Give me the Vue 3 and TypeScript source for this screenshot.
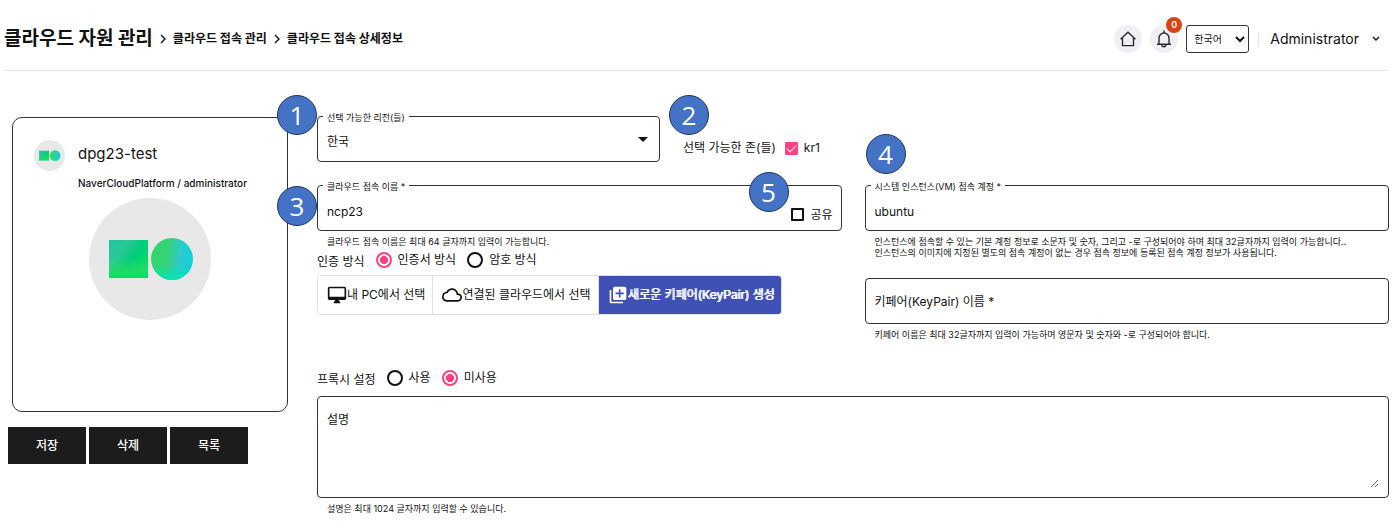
<script setup lang="ts">
import { ref } from 'vue'

const language = ref('ko')
const region = ref('kr')
const zoneKr1 = ref(true)
const connectionName = ref('ncp23')
const shared = ref(false)
const account = ref('ubuntu')
const keyPairName = ref('')
const authMethod = ref('cert')
const proxy = ref('off')
const description = ref('')
const actions = ['저장', '삭제', '목록']
</script>

<template>
  <div class="page">
    <header class="top">
      <nav class="crumbs" aria-label="breadcrumb">
        <h1>클라우드 자원 관리</h1>
        <svg class="sep" viewBox="0 0 6 10"><path d="M1 1l4 4-4 4" /></svg>
        <span>클라우드 접속 관리</span>
        <svg class="sep" viewBox="0 0 6 10"><path d="M1 1l4 4-4 4" /></svg>
        <span>클라우드 접속 상세정보</span>
      </nav>
      <div class="tools">
        <button class="round" type="button" aria-label="홈">
          <svg viewBox="0 0 18 18"><path d="M1.5 9.2L9 2.2l7.5 7M3.500 7.600v8h11v-8" /></svg>
        </button>
        <button class="round" type="button" aria-label="알림">
          <svg viewBox="0 0 18 18"><path d="M9 .5v2M2 14.2h14M4 14V8a5 5 0 0 1 10 0v6M6.800 14.500a2.200 2.200 0 0 0 4.400 0" /></svg>
          <span class="badge">0</span>
        </button>
        <select v-model="language" class="lang" aria-label="언어">
          <option value="ko">한국어</option>
        </select>
        <span class="bar"></span>
        <button class="user" type="button">
          Administrator
          <svg viewBox="0 0 8 6"><path d="M1 1l3 3 3-3" /></svg>
        </button>
      </div>
    </header>

    <main class="body">
      <aside class="side">
        <section class="card">
          <div class="card-head">
            <span class="avatar">
              <svg viewBox="0 0 122 122">
                <defs>
                  <linearGradient id="sq" x1="0" y1="0" x2="1" y2="0.7">
                    <stop offset="0" stop-color="#1cc6a4" />
                    <stop offset="0.35" stop-color="#2cc896" />
                    <stop offset="0.6" stop-color="#00cc7c" />
                    <stop offset="1" stop-color="#00e15c" />
                  </linearGradient>
                  <linearGradient id="sqg" x1="0" y1="0" x2="0" y2="1">
                    <stop offset="0.45" stop-color="#2fd872" stop-opacity="0" />
                    <stop offset="0.85" stop-color="#22dc62" stop-opacity="0.9" />
                    <stop offset="1" stop-color="#00df66" />
                  </linearGradient>
                  <linearGradient id="ci" x1="0" y1="0.4" x2="1" y2="0.5">
                    <stop offset="0" stop-color="#2fd868" />
                    <stop offset="0.38" stop-color="#36d278" />
                    <stop offset="0.68" stop-color="#2ccbc8" />
                    <stop offset="1" stop-color="#10cfe0" />
                  </linearGradient>
                  <linearGradient id="cig" x1="0" y1="0" x2="0" y2="1">
                    <stop offset="0.65" stop-color="#00e6b4" stop-opacity="0" />
                    <stop offset="1" stop-color="#00e6b4" />
                  </linearGradient>
                </defs>
                <rect x="20" y="42" width="39" height="38" fill="url(#sq)" />
                <rect x="20" y="42" width="39" height="38" fill="url(#sqg)" />
                <circle cx="83" cy="61" r="21" fill="url(#ci)" />
                <circle cx="83" cy="61" r="21" fill="url(#cig)" />
              </svg>
            </span>
            <div class="who">
              <h2>dpg23-test</h2>
              <p>NaverCloudPlatform / administrator</p>
            </div>
          </div>
          <span class="avatar big">
            <svg viewBox="0 0 122 122">
              <rect x="20" y="42" width="39" height="38" fill="url(#sq)" />
              <rect x="20" y="42" width="39" height="38" fill="url(#sqg)" />
              <circle cx="83" cy="61" r="21" fill="url(#ci)" />
              <circle cx="83" cy="61" r="21" fill="url(#cig)" />
            </svg>
          </span>
        </section>
        <div class="actions">
          <button v-for="a in actions" :key="a" type="button">{{ a }}</button>
        </div>
      </aside>

      <form class="form" @submit.prevent>
        <div class="row first">
          <div class="field region">
            <span class="mark m-region">1</span>
            <fieldset>
              <legend><label for="region">선택 가능한 리전(들)</label></legend>
              <select id="region" v-model="region">
                <option value="kr">한국</option>
              </select>
              <svg class="caret" viewBox="0 0 10 5"><path d="M0 0h10L5 5z" /></svg>
            </fieldset>
          </div>
          <div class="zones">
            <span class="mark m-zone">2</span>
            <span>선택 가능한 존(들)</span>
            <label class="check"><input v-model="zoneKr1" type="checkbox" />kr1</label>
          </div>
        </div>

        <div class="row cols">
          <div class="col">
            <div class="field">
              <span class="mark m-name">3</span>
              <span class="mark m-share">5</span>
              <fieldset>
                <legend><label for="conn">클라우드 접속 이름 *</label></legend>
                <input id="conn" v-model="connectionName" type="text" />
                <label class="check share"><input v-model="shared" type="checkbox" />공유</label>
              </fieldset>
            </div>
            <p class="help">클라우드 접속 이름은 최대 64 글자까지 입력이 가능합니다.</p>
            <div class="radios" role="radiogroup" aria-label="인증 방식">
              <span class="radio-title">인증 방식</span>
              <label><input v-model="authMethod" type="radio" name="auth" value="cert" />인증서 방식</label>
              <label><input v-model="authMethod" type="radio" name="auth" value="password" />암호 방식</label>
            </div>
            <div class="toggles">
              <button type="button">
                <svg viewBox="0 0 24 24"><path d="M21 2H3c-1.100 0-2 .9-2 2v12c0 1.100.9 2 2 2h7l-2 3v1h8v-1l-2-3h7c1.100 0 2-.9 2-2V4c0-1.100-.9-2-2-2zm0 12H3V4h18v10z" /></svg>
                내 PC에서 선택
              </button>
              <button type="button">
                <svg viewBox="0 0 24 24"><path d="M19.350 10.040C18.670 6.590 15.640 4 12 4 9.110 4 6.600 5.640 5.350 8.040 2.340 8.360 0 10.910 0 14c0 3.310 2.690 6 6 6h13c2.760 0 5-2.240 5-5 0-2.640-2.050-4.780-4.650-4.960zM19 18H6c-2.210 0-4-1.790-4-4s1.790-4 4-4h.71C7.370 7.690 9.480 6 12 6c3.040 0 5.500 2.460 5.500 5.500v.5H19c1.660 0 3 1.340 3 3s-1.340 3-3 3z" /></svg>
                연결된 클라우드에서 선택
              </button>
              <button class="on" type="button">
                <svg viewBox="0 0 24 24"><path d="M4 6H2v14c0 1.100.9 2 2 2h14v-2H4V6zm16-4H8c-1.100 0-2 .9-2 2v12c0 1.100.9 2 2 2h12c1.100 0 2-.9 2-2V4c0-1.100-.9-2-2-2zm-1 9h-4v4h-2v-4H9V9h4V5h2v4h4v2z" /></svg>
                새로운 키페어(KeyPair) 생성
              </button>
            </div>
          </div>

          <div class="col">
            <div class="field">
              <span class="mark m-account">4</span>
              <fieldset>
                <legend><label for="account">시스템 인스턴스(VM) 접속 계정 *</label></legend>
                <input id="account" v-model="account" type="text" />
              </fieldset>
            </div>
            <p class="help">
              인스턴스에 접속할 수 있는 기본 계정 정보로 소문자 및 숫자, 그리고 -로 구성되어야 하며 최대 32글자까지 입력이 가능합니다..<br />
              인스턴스의 이미지에 지정된 별도의 접속 계정이 없는 경우 접속 정보에 등록된 접속 계정 정보가 사용됩니다.
            </p>
            <div class="box keypair">
              <input v-model="keyPairName" type="text" placeholder="키페어(KeyPair) 이름 *" aria-label="키페어(KeyPair) 이름" />
            </div>
            <p class="help">키페어 이름은 최대 32글자까지 입력이 가능하며 영문자 및 숫자와 -로 구성되어야 합니다.</p>
          </div>
        </div>

        <div class="radios proxy" role="radiogroup" aria-label="프록시 설정">
          <span class="radio-title">프록시 설정</span>
          <label><input v-model="proxy" type="radio" name="proxy" value="on" />사용</label>
          <label><input v-model="proxy" type="radio" name="proxy" value="off" />미사용</label>
        </div>
        <div class="box desc">
          <textarea v-model="description" placeholder="설명" aria-label="설명"></textarea>
        </div>
        <p class="help">설명은 최대 1024 글자까지 입력할 수 있습니다.</p>
      </form>
    </main>
  </div>
</template>

<style>
body {
  background: #fff;
}
</style>

<style scoped>
.page {
  font-family: Inter, "Noto Sans CJK KR", sans-serif;
  font-size: 12px;
  line-height: 16px;
  color: #111;
  padding: 0 4px;
}
.page *,
.page *::before {
  box-sizing: border-box;
}
button,
input,
select,
textarea {
  font: inherit;
  color: inherit;
  margin: 0;
}
h1,
h2,
p {
  margin: 0;
}

.top {
  display: flex;
  justify-content: space-between;
  align-items: center;
  height: 71px;
  padding-top: 7px;
  border-bottom: 1px solid #e6e6e6;
}
.crumbs {
  display: flex;
  align-items: center;
  gap: 7px;
  font-weight: 700;
}
.crumbs h1 {
  font-size: 19px;
  line-height: 24px;
  font-weight: 700;
}
.sep {
  width: 6px;
  height: 10px;
}
svg path {
  fill: none;
  stroke: #111;
  stroke-width: 1.4;
}
.tools {
  display: flex;
  align-items: center;
}
.round {
  position: relative;
  display: flex;
  align-items: center;
  justify-content: center;
  width: 28px;
  height: 28px;
  margin-right: 8px;
  padding: 0;
  border: 0;
  border-radius: 50%;
  background: #f0f0f4;
}
.round svg {
  width: 18px;
  height: 18px;
}
.round path {
  stroke: #2b2b2b;
}
.badge {
  position: absolute;
  top: -8px;
  right: -4px;
  width: 16px;
  height: 16px;
  border-radius: 50%;
  background: #d84315;
  color: #fff;
  font-size: 9px;
  font-weight: 600;
  text-align: center;
}
.lang {
  width: 63px;
  height: 28px;
  padding: 0 3px;
  border: 1px solid #333;
  border-radius: 3px;
  background: #fff;
  font-size: 10px;
}
.bar {
  width: 1px;
  height: 14px;
  margin: 0 11px 0 9px;
  background: #e2e2e2;
}
.user {
  display: flex;
  align-items: center;
  gap: 13px;
  padding: 0 9px 0 0;
  border: 0;
  background: none;
  font-size: 14px;
}
.user svg {
  width: 8px;
  height: 6px;
}

.body {
  display: flex;
  gap: 29px;
  padding-top: 39px;
}
.side {
  flex: none;
  width: 284px;
  padding: 7px 0 0 4px;
}
.card {
  display: flex;
  flex-direction: column;
  align-items: center;
  margin-left: 4px;
  min-height: 295px;
  border: 1px solid #333;
  border-radius: 10px;
  padding: 22px 21px 0;
}
.card-head {
  display: flex;
  gap: 13px;
  width: 100%;
}
.avatar {
  display: block;
  flex: none;
  width: 31px;
  height: 31px;
  border-radius: 50%;
  background: #e8e8e8;
}
.avatar svg {
  display: block;
  width: 100%;
  height: 100%;
}
.avatar.big {
  width: 122px;
  height: 122px;
  margin-top: 6px;
}
.who h2 {
  font-size: 15px;
  line-height: 28px;
  font-weight: 400;
}
.who p {
  margin-top: 7px;
  font-size: 10px;
  font-weight: 500;
  line-height: 16px;
  margin-bottom: 1px;
  white-space: nowrap;
}
.actions {
  display: flex;
  gap: 3px;
  margin-top: 15px;
}
.actions button {
  width: 78px;
  height: 37px;
  border: 0;
  background: #1c1c1c;
  color: #fff;
  font-weight: 500;
}

.form {
  flex: 1;
  min-width: 0;
}
.first {
  display: flex;
  gap: 23px;
}
.region {
  width: 32%;
}
.field {
  position: relative;
}
fieldset {
  display: flex;
  position: relative;
  margin: 0;
  min-width: 0;
  height: 52px;
  padding: 0 8px 0 5px;
  border: 1px solid #333;
  border-radius: 4px;
}
legend {
  padding: 0 4px;
  height: 12px;
  font-size: 9px;
  line-height: 16px;
}
fieldset > input,
fieldset > select,
.box input {
  flex: 1;
  min-width: 0;
  height: 28px;
  padding: 0 0 0 4px;
  border: 0;
  outline: 0;
  background: none;
  appearance: none;
}
fieldset > input,
.region select {
  margin-top: 6px;
}
.caret {
  width: 10px;
  height: 5px;
  margin: 15px 3px 0 0;
}
.caret path {
  fill: #111;
  stroke: none;
}
.zones {
  position: relative;
  display: flex;
  align-items: center;
  gap: 9px;
  padding-top: 24px;
}
.check {
  display: flex;
  align-items: center;
  gap: 6px;
}
.share {
  margin-top: 8px;
}
.check input {
  appearance: none;
  width: 13px;
  height: 13px;
  border: 2px solid #111;
  border-radius: 1px;
  position: relative;
}
.check input:checked {
  border-color: #ff4081;
  background: #ff4081;
}
.check input:checked::before {
  content: '';
  position: absolute;
  left: 0;
  top: 1px;
  width: 9px;
  height: 5px;
  border-left: 1px solid #fff;
  border-bottom: 1px solid #fff;
  transform: rotate(-45deg);
}
.cols {
  display: grid;
  grid-template-columns: 1fr 1fr;
  gap: 23px;
  margin-top: 17px;
}
.col {
  min-width: 0;
}
.help {
  padding: 5px 0 0 10px;
  font-size: 9px;
  line-height: 11px;
}
.radios {
  display: flex;
  align-items: center;
  gap: 11px;
  height: 26px;
}
.radios label {
  display: flex;
  align-items: center;
  gap: 6px;
}
.radio-title {
  padding-top: 4px;
}
.radios input {
  appearance: none;
  width: 16px;
  height: 16px;
  border: 2px solid #111;
  border-radius: 50%;
}
.radios input:checked {
  border-color: #ff4081;
  background: radial-gradient(circle, #ff4081 4px, #fff 4px);
}
.toggles {
  display: inline-flex;
  height: 40px;
  margin-top: 2px;
  border: 1px solid #e0e0e0;
  border-radius: 4px;
  overflow: hidden;
}
.toggles button {
  display: flex;
  align-items: center;
  padding: 0 7px 0 9px;
  border: 0;
  border-right: 1px solid #e0e0e0;
  background: #fff;
  white-space: nowrap;
}
.toggles svg {
  width: 20px;
  height: 20px;
}
.toggles path {
  fill: currentColor;
  stroke: none;
}
.toggles .on {
  background: #3f51b5;
  color: #fff;
  text-shadow: 1px 0 #fff;
  border-right: 0;
}
.box {
  display: flex;
  border: 1px solid #333;
  border-radius: 4px;
  padding: 8px 9px 8px 5px;
}
.keypair {
  height: 46px;
  margin-top: 20px;
}
.box ::placeholder {
  color: #111;
  opacity: 1;
}
.proxy {
  margin-top: 25px;
}
.desc {
  margin-top: 5px;
  height: 102px;
  padding: 14px 9px 9px 5px;
}
.desc textarea {
  flex: 1;
  padding: 1px 4px;
  border: 0;
  outline: 0;
  background: none;
  resize: vertical;
}

/* numbered callouts laid over the form */
.mark {
  position: absolute;
  z-index: 1;
  width: 40px;
  height: 40px;
  border: 1px solid #1f3763;
  border-radius: 50%;
  background: #4472c4;
  color: #fff;
  font-family: "Open Sans", "Noto Sans", sans-serif;
  font-size: 26px;
  line-height: 38px;
  text-align: center;
}
.m-region {
  left: -40px;
  top: -15px;
}
.m-name {
  left: -40px;
  top: 7px;
}
.m-zone {
  left: -14px;
  top: -15px;
}
.m-share {
  right: 53px;
  top: -7px;
}
.m-account {
  left: 1px;
  top: -45px;
}
</style>
